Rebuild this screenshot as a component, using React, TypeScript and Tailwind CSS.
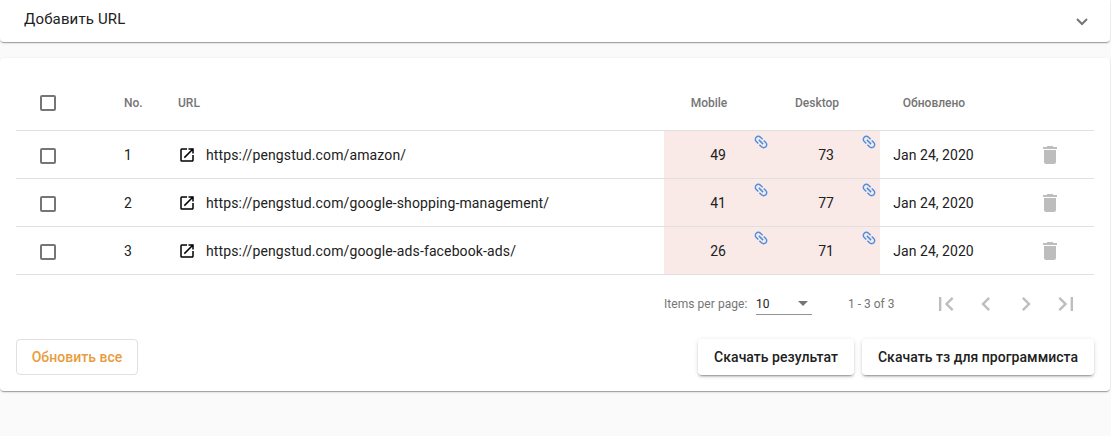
import React from "react";

const rows = [
  { n: 1, url: "https://pengstud.com/amazon/", mobile: 49, desktop: 73 },
  { n: 2, url: "https://pengstud.com/google-shopping-management/", mobile: 41, desktop: 77 },
  { n: 3, url: "https://pengstud.com/google-ads-facebook-ads/", mobile: 26, desktop: 71 },
];

const cardShadow =
  "shadow-[0_2px_1px_-1px_rgba(0,0,0,0.2),0_1px_1px_0_rgba(0,0,0,0.14),0_1px_3px_0_rgba(0,0,0,0.12)]";
const buttonShadow =
  "shadow-[0_3px_1px_-2px_rgba(0,0,0,0.2),0_2px_2px_0_rgba(0,0,0,0.14),0_1px_5px_0_rgba(0,0,0,0.12)]";
const grid = "grid grid-cols-[108px_54px_486px_108px_108px_108px_106px]";

function Checkbox() {
  return <span className="ml-6 mt-px block size-4 rounded-[2px] border-2 border-[#757575]" />;
}

function Icon({ d, className }: { d: string; className: string }) {
  return (
    <svg viewBox="0 0 24 24" fill="currentColor" className={className}>
      <path d={d} />
    </svg>
  );
}

function Score({ value }: { value: number }) {
  return (
    <div className="relative flex items-center justify-center bg-[#f9e9e7]">
      {value}
      <Icon
        className="absolute right-[2px] top-[2px] size-[18px] rotate-45 text-[#4a90e2]"
        d="M3.900 12c0-1.710 1.390-3.100 3.100-3.100h4V7H7c-2.760 0-5 2.240-5 5s2.240 5 5 5h4v-1.900H7c-1.710 0-3.100-1.390-3.100-3.100zM8 13h8v-2H8v2zm9-6h-4v1.900h4c1.710 0 3.100 1.390 3.100 3.100s-1.390 3.100-3.100 3.100h-4V17h4c2.760 0 5-2.240 5-5s-2.240-5-5-5z"
      />
    </div>
  );
}

const pagerIcons = [
  "M18.41 16.59L13.82 12l4.590-4.590L17 6l-6 6 6 6zM6 6h2v12H6z",
  "M15.41 7.41L14 6l-6 6 6 6 1.410-1.410L10.830 12z",
  "M10 6L8.590 7.410 13.170 12l-4.580 4.590L10 18l6-6z",
  "M5.590 7.410L10.180 12l-4.590 4.590L7 18l6-6-6-6zM16 6h2v12h-2z",
];

export default function App() {
  return (
    <div className="h-[436px] overflow-hidden bg-[#fafafa] pr-px font-['Roboto',sans-serif] text-sm text-[#212121]">
      <section className={`flex h-[42px] items-center justify-between rounded-b bg-white pl-6 pr-[22px] ${cardShadow}`}>
        <h1 className="-mt-1 text-[15px] leading-5 tracking-[0.15px]">Добавить URL</h1>
        <svg viewBox="0 0 12 8" className="mt-0.5 h-2 w-3" fill="none" stroke="#757575" strokeWidth="2">
          <path d="M1 1l5 5 5-5" />
        </svg>
      </section>

      <main className={`mt-4 h-[333px] rounded bg-white p-4 ${cardShadow}`}>
        <div className={`${grid} h-[57px] items-center border-b border-[#e0e0e0] text-xs font-medium text-[#757575]`}>
          <Checkbox />
          <span className="pt-0.5">No.</span>
          <span className="pt-0.5">URL</span>
          <span className="pr-[18px] pt-0.5 text-center">Mobile</span>
          <span className="pr-[18px] pt-0.5 text-center">Desktop</span>
          <span className="pt-0.5 text-center">Обновлено</span>
        </div>
        {rows.map((r) => (
          <div key={r.n} className={`${grid} h-12 border-b border-[#e0e0e0]`}>
            <div className="flex items-center pt-0.5">
              <Checkbox />
            </div>
            <span className="self-center">{r.n}</span>
            <div className="flex items-center">
              <Icon
                className="size-[18px] text-black"
                d="M19 19H5V5h7V3H5a2 2 0 0 0-2 2v14a2 2 0 0 0 2 2h14c1.100 0 2-.9 2-2v-7h-2v7zM14 3v2h3.590l-9.830 9.830 1.410 1.410L19 6.410V10h2V3h-7z"
              />
              <span className="ml-2.5 tracking-[0.13px]">{r.url}</span>
            </div>
            <Score value={r.mobile} />
            <Score value={r.desktop} />
            <span className="self-center pr-px text-center tracking-[0.04px]">Jan 24, 2020</span>
            <div className="flex items-center pl-[50px]">
              <Icon
                className="size-6 text-[#bdbdbd]"
                d="M6 19c0 1.100.9 2 2 2h8c1.100 0 2-.9 2-2V7H6v12zM19 4h-3.500l-1-1h-5l-1 1H5v2h14V4z"
              />
            </div>
          </div>
        ))}

        <div className="flex h-[58px] items-center pl-[648px] text-xs text-[#757575]">
          <span className="w-[92px] tracking-[0.05px]">Items per page:</span>
          <div className="flex h-[22px] w-14 items-center justify-between border-b border-[#949494] pr-1 text-[#212121]">
            <span>10</span>
            <span className="border-x-[5px] border-t-[5px] border-x-transparent border-t-[#757575]" />
          </div>
          <span className="ml-9 w-[78px]">1 - 3 of 3</span>
          {pagerIcons.map((d) => (
            <span key={d} className="flex w-10 shrink-0 justify-center">
              <Icon d={d} className="size-7 text-[#bdbdbd]" />
            </span>
          ))}
        </div>

        <div className="mt-1.5 flex gap-2 font-medium leading-9 tracking-[0.04px]">
          <button className="mr-auto h-9 w-[122px] rounded border border-[#e0e0e0] leading-[34px] text-[#e99c3d]">
            Обновить все
          </button>
          <button className={`h-9 w-[156px] rounded bg-white ${buttonShadow}`}>Скачать результат</button>
          <button className={`h-9 w-[232px] rounded bg-white ${buttonShadow}`}>Скачать тз для программиста</button>
        </div>
      </main>
    </div>
  );
}
